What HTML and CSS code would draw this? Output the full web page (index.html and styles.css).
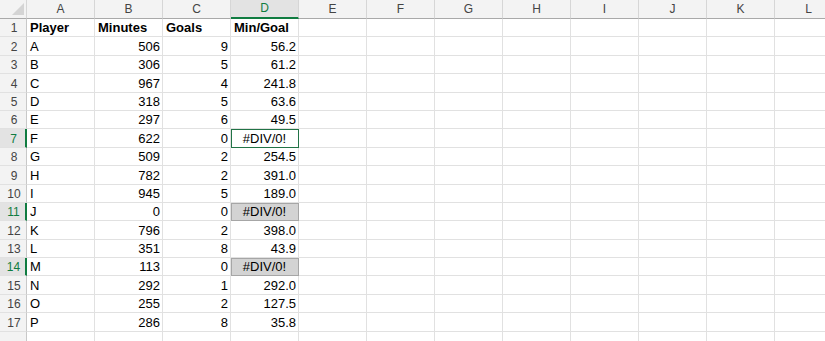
FILE: index.html
```html
<!DOCTYPE html>
<html>
<head>
<meta charset="utf-8">
<link rel="stylesheet" href="styles.css">
</head>
<body>
<table class="sheet">
  <colgroup>
    <col class="c-rh">
    <col class="c"><col class="c"><col class="c"><col class="c"><col class="c"><col class="c">
    <col class="c"><col class="c"><col class="c"><col class="c"><col class="c"><col class="c">
  </colgroup>
  <tr class="hdr">
    <th class="corner"><svg width="12" height="12" viewBox="0 0 12 12"><polygon points="12,0 12,12 0,12" fill="#d4d4d4"/></svg></th>
    <th>A</th><th>B</th><th>C</th><th class="sel">D</th><th>E</th><th>F</th><th>G</th><th>H</th><th>I</th><th>J</th><th>K</th><th>L</th>
  </tr>
  <tr><th class="rh">1</th><td class="b">Player</td><td class="b">Minutes</td><td class="b">Goals</td><td class="b">Min/Goal</td><td></td><td></td><td></td><td></td><td></td><td></td><td></td><td></td></tr>
  <tr><th class="rh">2</th><td>A</td><td class="n">506</td><td class="n">9</td><td class="n">56.2</td><td></td><td></td><td></td><td></td><td></td><td></td><td></td><td></td></tr>
  <tr><th class="rh">3</th><td>B</td><td class="n">306</td><td class="n">5</td><td class="n">61.2</td><td></td><td></td><td></td><td></td><td></td><td></td><td></td><td></td></tr>
  <tr><th class="rh">4</th><td>C</td><td class="n">967</td><td class="n">4</td><td class="n">241.8</td><td></td><td></td><td></td><td></td><td></td><td></td><td></td><td></td></tr>
  <tr><th class="rh">5</th><td>D</td><td class="n">318</td><td class="n">5</td><td class="n">63.6</td><td></td><td></td><td></td><td></td><td></td><td></td><td></td><td></td></tr>
  <tr><th class="rh">6</th><td>E</td><td class="n">297</td><td class="n">6</td><td class="n">49.5</td><td></td><td></td><td></td><td></td><td></td><td></td><td></td><td></td></tr>
  <tr><th class="rh sel">7</th><td>F</td><td class="n">622</td><td class="n">0</td><td class="err active">#DIV/0!</td><td></td><td></td><td></td><td></td><td></td><td></td><td></td><td></td></tr>
  <tr><th class="rh">8</th><td>G</td><td class="n">509</td><td class="n">2</td><td class="n">254.5</td><td></td><td></td><td></td><td></td><td></td><td></td><td></td><td></td></tr>
  <tr><th class="rh">9</th><td>H</td><td class="n">782</td><td class="n">2</td><td class="n">391.0</td><td></td><td></td><td></td><td></td><td></td><td></td><td></td><td></td></tr>
  <tr><th class="rh">10</th><td>I</td><td class="n">945</td><td class="n">5</td><td class="n">189.0</td><td></td><td></td><td></td><td></td><td></td><td></td><td></td><td></td></tr>
  <tr><th class="rh sel">11</th><td>J</td><td class="n">0</td><td class="n">0</td><td class="err grey">#DIV/0!</td><td></td><td></td><td></td><td></td><td></td><td></td><td></td><td></td></tr>
  <tr><th class="rh">12</th><td>K</td><td class="n">796</td><td class="n">2</td><td class="n">398.0</td><td></td><td></td><td></td><td></td><td></td><td></td><td></td><td></td></tr>
  <tr><th class="rh">13</th><td>L</td><td class="n">351</td><td class="n">8</td><td class="n">43.9</td><td></td><td></td><td></td><td></td><td></td><td></td><td></td><td></td></tr>
  <tr><th class="rh sel">14</th><td>M</td><td class="n">113</td><td class="n">0</td><td class="err grey">#DIV/0!</td><td></td><td></td><td></td><td></td><td></td><td></td><td></td><td></td></tr>
  <tr><th class="rh">15</th><td>N</td><td class="n">292</td><td class="n">1</td><td class="n">292.0</td><td></td><td></td><td></td><td></td><td></td><td></td><td></td><td></td></tr>
  <tr><th class="rh">16</th><td>O</td><td class="n">255</td><td class="n">2</td><td class="n">127.5</td><td></td><td></td><td></td><td></td><td></td><td></td><td></td><td></td></tr>
  <tr><th class="rh">17</th><td>P</td><td class="n">286</td><td class="n">8</td><td class="n">35.8</td><td></td><td></td><td></td><td></td><td></td><td></td><td></td><td></td></tr>
  <tr><th class="rh"></th><td></td><td></td><td></td><td></td><td></td><td></td><td></td><td></td><td></td><td></td><td></td><td></td></tr>
</table>
</body>
</html>
```
FILE: styles.css
```css
html, body {
  margin: 0;
  padding: 0;
  background: #ffffff;
  overflow: hidden;
}
.sheet {
  border-collapse: separate;
  border-spacing: 0;
  table-layout: fixed;
  width: 843px;
  font-family: "Liberation Sans", Arial, sans-serif;
  font-size: 13px;
  color: #000;
}
.c-rh { width: 27px; }
.c { width: 68px; }
.sheet td, .sheet th {
  box-sizing: border-box;
  border-right: 1px solid #e1e1e1;
  border-bottom: 1px solid #e1e1e1;
  padding: 0 3px;
  height: 18.4px;
  line-height: 14px;
  vertical-align: bottom;
  padding-bottom: 1px;
  white-space: nowrap;
  overflow: hidden;
  text-align: left;
}
.sheet td.b { font-weight: bold; }
.sheet td.n { text-align: right; padding-right: 2px; }
.hdr th {
  height: 19px;
  background: #f3f3f3;
  border-right: 1px solid #d6d6d6;
  border-bottom: 1px solid #a9a9a9;
  font-weight: normal;
  font-size: 12px;
  color: #444;
  text-align: center;
  padding-bottom: 2px;
}
.hdr th.sel {
  background: #e3e3e3;
  color: #107c41;
  border-bottom: 2px solid #107c41;
}
.hdr th.corner {
  position: relative;
  padding: 0;
}
.corner svg {
  position: absolute;
  right: 2px;
  bottom: 3px;
}
.sheet th.rh {
  background: #f3f3f3;
  border-right: 1px solid #c8c8c8;
  border-bottom: 1px solid #e1e1e1;
  font-weight: normal;
  font-size: 12px;
  color: #444;
  text-align: center;
  padding: 0 0 1px 2px;
}
.sheet th.rh.sel {
  background: #e3e3e3;
  color: #107c41;
  border-right: 2px solid #107c41;
}
.sheet td.err {
  text-align: center;
  padding: 0 1px 1px 1px;
}
.sheet td.active {
  box-shadow: inset 1px 1px 0 0 #217346;
  border-right-color: #217346;
  border-bottom-color: #217346;
}
.sheet td.grey {
  background: #d3d3d3;
  box-shadow: inset 1px 1px 0 0 #a6a6a6;
  border-right-color: #a6a6a6;
  border-bottom-color: #a6a6a6;
}
```
